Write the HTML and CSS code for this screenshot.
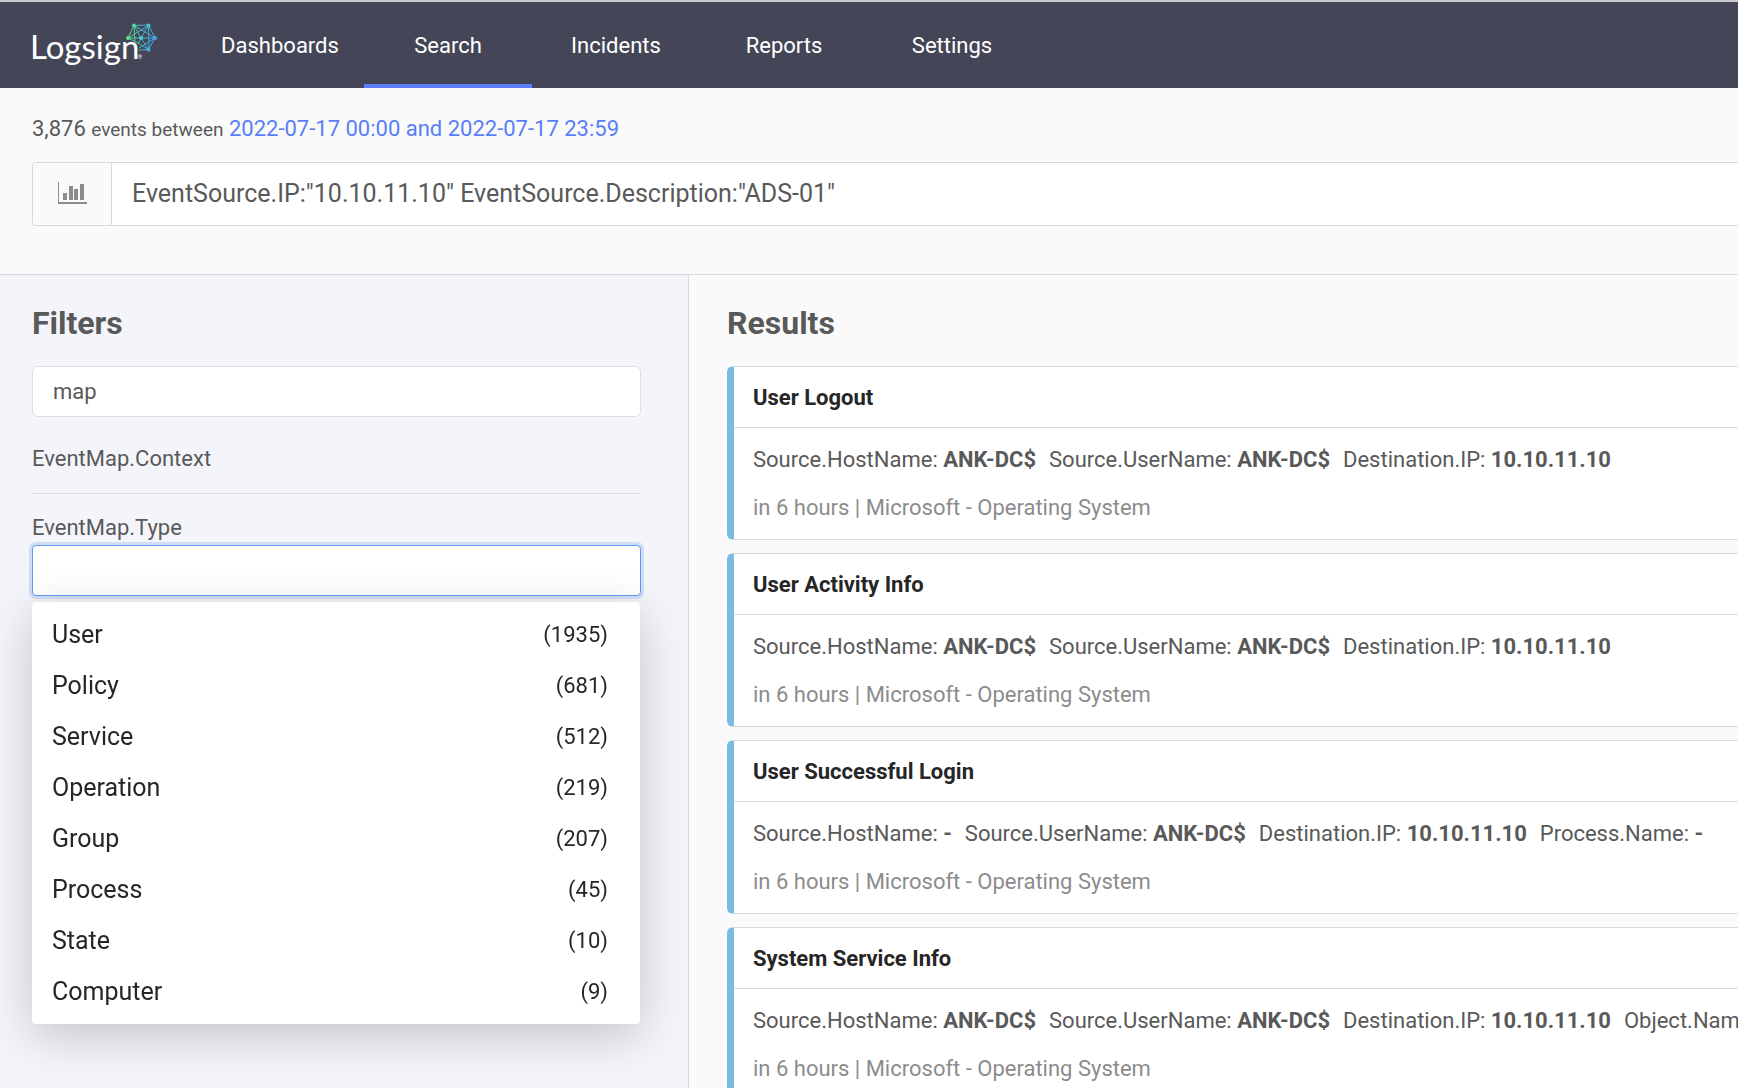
FILE: index.html
```html
<!DOCTYPE html>
<html lang="en">
  <head>
    <meta charset="UTF-8" />
    <meta name="viewport" content="width=device-width, initial-scale=1.0" />
    <title>Logsign - Search</title>
    <link rel="stylesheet" href="styles.css">
  </head>
  <body>
    <header class="topbar">
      <a class="logo" href="#" aria-label="Logsign">
        <svg width="134" height="52" viewBox="-4 0 134 52">
          <text class="logo-text" x="-2" y="39">Logsign</text>
          <text class="logo-mark" x="106" y="39">®</text>
          <defs>
            <linearGradient id="net" x1="95" y1="0" x2="123" y2="0" gradientUnits="userSpaceOnUse">
              <stop offset="0" stop-color="#5fe08a" />
              <stop offset="0.55" stop-color="#3fb5cf" />
              <stop offset="1" stop-color="#45a9ee" />
            </linearGradient>
          </defs>
          <g stroke="url(#net)" stroke-width="1" fill="none">
            <path d="M102 5.500L116.500 5L123 18L116.500 29.500L107 30M96 18L102 5.500M96 18L116.500 5.500M96 18L109 18L123 18.100M96 18L106 23L116.500 29.500M102 5.500L109 18L116.500 29.500M102 5.500L123 18M102 5.500L103 22M116.500 5.500L109 18L106 24M116.500 5.500L117 29.500M123 18L107 28" />
          </g>
          <g>
            <circle cx="102" cy="5.500" r="2" fill="#55d8a0" />
            <circle cx="116.500" cy="5.500" r="2" fill="#3fc4c8" />
            <circle cx="96" cy="18" r="2" fill="#5fe08a" />
            <circle cx="109" cy="18" r="2" fill="#45d0c0" />
            <circle cx="123" cy="18" r="2" fill="#45a9ee" />
            <circle cx="116.500" cy="29.500" r="2" fill="#45b0e8" />
          </g>
        </svg>
      </a>
      <nav class="menu">
        <a href="#">Dashboards</a>
        <a href="#" class="active">Search</a>
        <a href="#">Incidents</a>
        <a href="#">Reports</a>
        <a href="#">Settings</a>
      </nav>
    </header>

    <section class="search">
      <p class="summary">
        3,876 <small>events between</small>
        <a href="#">2022-07-17 00:00 and 2022-07-17 23:59</a>
      </p>
      <div class="search-box">
        <button class="chart-btn" type="button" aria-label="Chart">
          <svg width="30" height="24" viewBox="0 0 30 24" fill="#8c8c8c">
            <path d="M1 0h1v20h28v2H1z" />
            <path d="M6 11h4v7H6zM12 4h4v14h-4zM17 7h4v11h-4zM23 2h4v16h-4z" />
          </svg>
        </button>
        <input type="text" class="query" aria-label="Search query" value='EventSource.IP:"10.10.11.10" EventSource.Description:"ADS-01"' />
      </div>
    </section>

    <main class="content">
      <aside class="filters">
        <h2>Filters</h2>
        <input type="text" class="filter-search" aria-label="Search filters" value="map" />
        <div class="filter">
          <span>EventMap.Context</span>
        </div>
        <div class="filter">
          <label for="eventType">EventMap.Type</label>
          <input type="text" class="filter-input" id="eventType" />
          <ul class="dropdown">
            <li><span>User</span><span class="count">(1935)</span></li>
            <li><span>Policy</span><span class="count">(681)</span></li>
            <li><span>Service</span><span class="count">(512)</span></li>
            <li><span>Operation</span><span class="count">(219)</span></li>
            <li><span>Group</span><span class="count">(207)</span></li>
            <li><span>Process</span><span class="count">(45)</span></li>
            <li><span>State</span><span class="count">(10)</span></li>
            <li><span>Computer</span><span class="count">(9)</span></li>
          </ul>
        </div>
      </aside>

      <section class="results">
        <h2>Results</h2>
        <article class="card">
          <h3>User Logout</h3>
          <div class="card-body">
            <p class="fields">
              <span>Source.HostName: <b>ANK-DC$</b></span>
              <span>Source.UserName: <b>ANK-DC$</b></span>
              <span>Destination.IP: <b>10.10.11.10</b></span>
            </p>
            <p class="meta">in 6 hours | Microsoft - Operating System</p>
          </div>
        </article>
        <article class="card">
          <h3>User Activity Info</h3>
          <div class="card-body">
            <p class="fields">
              <span>Source.HostName: <b>ANK-DC$</b></span>
              <span>Source.UserName: <b>ANK-DC$</b></span>
              <span>Destination.IP: <b>10.10.11.10</b></span>
            </p>
            <p class="meta">in 6 hours | Microsoft - Operating System</p>
          </div>
        </article>
        <article class="card">
          <h3>User Successful Login</h3>
          <div class="card-body">
            <p class="fields">
              <span>Source.HostName: <b>-</b></span>
              <span>Source.UserName: <b>ANK-DC$</b></span>
              <span>Destination.IP: <b>10.10.11.10</b></span>
              <span>Process.Name: <b>-</b></span>
            </p>
            <p class="meta">in 6 hours | Microsoft - Operating System</p>
          </div>
        </article>
        <article class="card">
          <h3>System Service Info</h3>
          <div class="card-body">
            <p class="fields">
              <span>Source.HostName: <b>ANK-DC$</b></span>
              <span>Source.UserName: <b>ANK-DC$</b></span>
              <span>Destination.IP: <b>10.10.11.10</b></span>
              <span>Object.Name:</span>
            </p>
            <p class="meta">in 6 hours | Microsoft - Operating System</p>
          </div>
        </article>
      </section>
    </main>

    <script>
      document.getElementById("eventType").focus();
    </script>
  </body>
</html>
```

FILE: styles.css
```css
* {
  margin: 0;
  padding: 0;
  box-sizing: border-box;
}

body {
  display: flex;
  flex-direction: column;
  height: 100vh;
  overflow: hidden;
  background-color: #fafafa;
  color: #595959;
  font-family: Roboto, "Liberation Sans", sans-serif;
  font-size: 22px;
  line-height: 26px;
}

a {
  color: #597ef7;
  text-decoration: none;
}

input,
button {
  font: inherit;
  color: inherit;
}

.topbar {
  display: flex;
  flex-shrink: 0;
  height: 88px;
  padding-left: 28px;
  background-color: #444658;
  border-top: 2px solid #c9cacd;
}

.logo {
  width: 168px;
  padding-top: 18px;
}

.logo-text {
  font-family: Lato, sans-serif;
  font-size: 33px;
  fill: #fff;
}

.logo-mark {
  font-size: 5px;
  fill: #fff;
}

.menu {
  display: flex;
}

.menu a {
  width: 168px;
  padding-top: 31px;
  border-bottom: 4px solid transparent;
  color: #fff;
  text-align: center;
}

.menu .active {
  border-bottom-color: #597ef7;
}

.search {
  flex-shrink: 0;
  padding: 28px 0 48px 32px;
  border-bottom: 1px solid #d9d9d9;
}

.summary small {
  font-size: 19px;
}

.search-box {
  display: flex;
  height: 64px;
  margin-top: 19px;
  border: 1px solid #d9d9d9;
  border-right: none;
  border-radius: 4px 0 0 4px;
  overflow: hidden;
}

.chart-btn {
  display: flex;
  align-items: center;
  justify-content: center;
  width: 79px;
  background-color: #fafafa;
  border: none;
  border-right: 1px solid #d9d9d9;
  cursor: pointer;
}

.query {
  flex: 1;
  padding: 0 20px;
  border: none;
  outline: none;
  background-color: #fff;
  font-size: 25px;
}

.content {
  display: flex;
  flex: 1;
  min-height: 0;
}

h2 {
  margin-bottom: 25px;
  font-size: 32px;
  line-height: 36px;
}

.filters {
  flex-shrink: 0;
  width: 689px;
  padding: 30px 47px 0 32px;
  background-color: #f4f5fa;
  border-right: 1px solid #d9d9d9;
}

.filter-search,
.filter-input {
  display: block;
  width: 100%;
  height: 51px;
  padding: 0 20px;
  border: 1px solid #dcdfe3;
  border-radius: 6px;
  background-color: #fff;
}

.filter {
  position: relative;
  padding: 21px 0 17px;
  border-bottom: 1px solid #d9dbe0;
}

.filter-search + .filter {
  padding: 29px 0 21px;
}

.filter label {
  display: block;
  margin-bottom: 4px;
}

.filter-input {
  border-radius: 4px;
}

.filter-input:focus {
  border-color: #5a9ff5;
  outline: none;
  box-shadow: 0 0 0 3px #d0ddf5;
  caret-color: transparent;
}

.dropdown {
  position: absolute;
  top: 108px;
  left: 0;
  right: 1px;
  padding: 7px 32px 7px 20px;
  background-color: #fff;
  border-radius: 4px;
  box-shadow: 0 12px 48px rgba(0, 0, 0, 0.2);
  color: #262626;
  list-style: none;
}

.dropdown li {
  display: flex;
  justify-content: space-between;
  font-size: 25px;
  line-height: 51px;
}

.dropdown .count {
  font-size: 22px;
}

.results {
  flex: 1;
  min-width: 0;
  padding: 30px 0 0 38px;
}

.card {
  height: 174px;
  margin-bottom: 13px;
  background-color: #fff;
  border: 1px solid #d9d9d9;
  border-left: 7px solid #78bce4;
  border-right: none;
  border-radius: 6px 0 0 6px;
  overflow: hidden;
  white-space: nowrap;
}

.card h3 {
  padding: 18px 19px 16px;
  border-bottom: 1px solid #d9d9d9;
  color: #262626;
  font-size: 22px;
}

.card-body {
  padding: 19px;
}

.fields {
  display: flex;
  gap: 13px;
}

.meta {
  margin-top: 22px;
  color: #8c8c8c;
}
```
